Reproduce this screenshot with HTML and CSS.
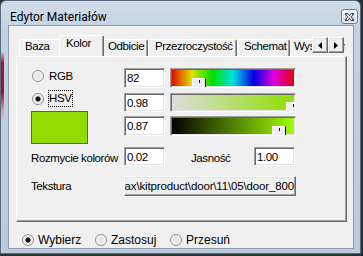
FILE: index.html
```html
<!DOCTYPE html>
<html lang="pl">
<head>
<meta charset="utf-8">
<title>Edytor Materiałów</title>
<link rel="stylesheet" href="styles.css">
</head>
<body>
<div class="window">
  <div class="titlebar">
    <span class="title">Edytor Materiałów</span>
    <span class="close">
      <svg width="9" height="8" viewBox="0 0 9 8"><path d="M1.5 1 L7.5 7 M7.5 1 L1.5 7" stroke="#2f3844" stroke-width="3" stroke-linecap="square"/><path d="M1.8 1.3 L7.2 6.7 M7.2 1.3 L1.8 6.7" stroke="#fff" stroke-width="1.3"/></svg>
    </span>
  </div>
  <div class="frame">
    <div class="client">
      <div class="tabrow">
        <div class="tab w-baza">Baza</div>
        <div class="tab selected">Kolor</div>
        <div class="tab w-odb">Odbicie</div>
        <div class="tab w-prz">Przezroczystość</div>
        <div class="tab w-sch">Schemat</div>
        <div class="tab w-wy">Wyświetlanie</div>
        <div class="scroller">
          <span class="sbtn"><svg width="4" height="7" viewBox="0 0 4 7"><path d="M4 0 L0 3.5 L4 7 Z" fill="#000"/></svg></span>
          <span class="sbtn"><svg width="4" height="7" viewBox="0 0 4 7"><path d="M0 0 L4 3.5 L0 7 Z" fill="#000"/></svg></span>
        </div>
      </div>
      <div class="panel">
        <div class="top">
          <div class="modes-col">
            <div class="opt rgb"><span class="radio"></span><span class="optlabel">RGB</span></div>
            <div class="opt hsv"><span class="radio checked"></span><span class="optlabel focus">HSV</span></div>
            <div class="swatch"></div>
          </div>
          <div class="channels">
            <div class="channel h20"><div class="edit">82</div><div class="track hue"><span class="thumb" style="left:calc(22.8% - 7px)"></span></div></div>
            <div class="channel h19"><div class="edit">0.98</div><div class="track sat"><span class="thumb" style="left:calc(98% - 7px)"></span></div></div>
            <div class="channel h20"><div class="edit">0.87</div><div class="track val"><span class="thumb" style="left:calc(87% - 7px)"></span></div></div>
          </div>
        </div>
        <div class="row row-blur">
          <span class="lbl lbl-first">Rozmycie kolorów</span>
          <div class="edit">0.02</div>
          <span class="lbl lbl-jas">Jasność</span>
          <div class="edit">1.00</div>
        </div>
        <div class="row row-tex">
          <span class="lbl lbl-first">Tekstura</span>
          <div class="button tex"><span>C:\3dsmax\kitproduct\door\11\05\door_800</span></div>
        </div>
      </div>
      <div class="modes">
        <div class="mode m1"><span class="radio checked"></span><span class="mlabel">Wybierz</span></div>
        <div class="mode m2"><span class="radio"></span><span class="mlabel">Zastosuj</span></div>
        <div class="mode m3"><span class="radio"></span><span class="mlabel">Przesuń</span></div>
      </div>
    </div>
  </div>
</div>
</body>
</html>
```

FILE: styles.css
```css
html, body {
  margin: 0;
  padding: 0;
}
body {
  background: #2a2e35;
  width: 363px;
  height: 256px;
  overflow: hidden;
}
.window {
  box-sizing: border-box;
  width: 361px;
  height: 254px;
  border: 1px solid #5b6b7e;
  border-radius: 6px 6px 0 0;
  background:
    linear-gradient(to bottom, rgba(0,0,0,0) 50px, #a3142a 62px, #a3142a 92px, #c8a6b6 110px, rgba(0,0,0,0) 122px) left top / 3px 100% no-repeat,
    linear-gradient(to bottom, #d2dde9 0, #c3d2e2 30px, #bccbdc 100%);
  overflow: hidden;
}
.titlebar {
  height: 24px;
  box-sizing: border-box;
  padding: 9px 2px 0 9px;
  display: flex;
  align-items: flex-start;
}
.title {
  font-family: Roboto, "Liberation Sans", sans-serif;
  font-size: 12px;
  line-height: 14px;
  color: #000;
}
.close {
  margin-left: auto;
  margin-top: -1px;
  box-sizing: border-box;
  width: 17px;
  height: 15px;
  border: 1px solid #6a788a;
  border-radius: 3px;
  background: linear-gradient(#eef3f8, #cfdae6);
  box-shadow: inset 0 0 0 1px rgba(255,255,255,0.7);
  display: flex;
  align-items: center;
  justify-content: center;
}
.close svg { display: block; }
.frame {
  padding: 0 6px 4px 7px;
}
.client {
  box-sizing: border-box;
  width: 346px;
  height: 224px;
  border: 1px solid #8d9cae;
  background: #f0f0f0;
  font-family: "Liberation Sans", Arial, sans-serif;
  font-size: 11.5px;
  letter-spacing: -0.4px;
  color: #000;
}
/* tabs */
.tabrow {
  position: relative;
  display: flex;
  align-items: flex-start;
  margin: 9px 0 0 10px;
  height: 21px;
  width: 326px;
  overflow: hidden;
  z-index: 2;
}
.tab {
  flex: none;
  box-sizing: border-box;
  height: 17px;
  margin-top: 4px;
  padding-left: 5px;
  line-height: 12px;
  background: #f0f0f0;
  border-top: 1px solid #fff;
  border-left: 1px solid #fff;
  border-right: 1px solid #696969;
  box-shadow: inset -1px 0 #a0a0a0;
  border-radius: 2px 2px 0 0;
  white-space: nowrap;
  overflow: hidden;
}
.w-baza { width: 42px; }
.w-odb { width: 46px; }
.w-prz { width: 89px; padding-left: 6px; }
.w-sch { width: 53px; padding-left: 6px; }
.w-wy { width: 60px; padding-left: 3px; }
.tab.selected {
  width: 45px;
  height: 22px;
  margin: 0 -2px;
  padding: 1px 0 0 6px;
  position: relative;
  z-index: 3;
}
.scroller {
  position: absolute;
  left: 293px;
  top: 2px;
  display: flex;
  z-index: 4;
}
.sbtn {
  box-sizing: border-box;
  width: 16px;
  height: 16px;
  background: #f0f0f0;
  border-top: 1px solid #fff;
  border-left: 1px solid #fff;
  border-right: 1px solid #696969;
  border-bottom: 1px solid #696969;
  box-shadow: inset -1px -1px #a0a0a0, inset 1px 1px #e3e3e3;
  display: flex;
  align-items: center;
  justify-content: center;
}
.sbtn svg { display: block; }
/* panel */
.panel {
  position: relative;
  z-index: 1;
  box-sizing: border-box;
  width: 331px;
  height: 166px;
  margin-left: 7px;
  padding: 11px 0 0 14px;
  border-top: 1px solid #fff;
  border-left: 1px solid #fff;
  border-right: 1px solid #696969;
  border-bottom: 1px solid #696969;
  box-shadow: inset -1px -1px #a0a0a0;
}
.top {
  display: flex;
}
.modes-col {
  width: 93px;
  display: flex;
  flex-direction: column;
}
.opt {
  display: flex;
  align-items: center;
}
.opt.rgb {
  margin-top: 2px;
  height: 12px;
}
.opt.hsv {
  margin-top: 8px;
  height: 17px;
}
.opt .radio { margin-left: 1px; }
.optlabel {
  margin-left: 5px;
  line-height: 12px;
}
.optlabel.focus {
  margin-left: 4px;
  box-sizing: border-box;
  height: 17px;
  line-height: 15px;
  border: 1px dotted #000;
  padding: 0 1px 0 0;
}
.swatch {
  margin-top: 4px;
  box-sizing: border-box;
  width: 57px;
  height: 33px;
  background: #92dc03;
  border: 1px solid #5c5c5c;
}
.channels {
  display: flex;
  flex-direction: column;
  gap: 5px;
}
.channels .h19 { height: 19px; margin-bottom: -1px; }
.channels .h20 { height: 20px; }
.channel {
  display: flex;
  gap: 5px;
}
.edit {
  box-sizing: border-box;
  width: 41px;
  height: 100%;
  background: #fff;
  border-top: 1px solid #a0a0a0;
  border-left: 1px solid #a0a0a0;
  border-bottom: 1px solid #fff;
  border-right: 1px solid #fff;
  box-shadow: inset 1px 1px #696969, inset -1px -1px #e3e3e3;
  padding: 1px 0 0 2px;
  line-height: 16px;
  white-space: nowrap;
  overflow: hidden;
}
.track {
  position: relative;
  box-sizing: border-box;
  width: 126px;
  height: 100%;
  border-top: 1px solid #a0a0a0;
  border-left: 1px solid #a0a0a0;
  border-bottom: 1px solid #fff;
  border-right: 1px solid #fff;
  overflow: hidden;
}
.track.hue {
  background: linear-gradient(to right, #e00000 0%, #e0e000 16.67%, #00e000 33.33%, #00e0e0 50%, #0000e0 66.67%, #e000e0 83.33%, #e00000 100%);
}
.track.sat {
  background: linear-gradient(to right, #dedede, #8ede00);
}
.track.val {
  background: linear-gradient(to right, #000, #a2ff04);
}
.track::after {
  content: "";
  position: absolute;
  inset: 0;
  box-shadow: inset 1px 1px #696969, inset -1px -1px #e3e3e3;
  pointer-events: none;
}
.thumb {
  position: absolute;
  bottom: 0;
  box-sizing: border-box;
  width: 14px;
  height: 9px;
  background: linear-gradient(#000, #000) 6px 1px / 1px 3px no-repeat, #f0f0f0;
  border-top: 1px solid #fff;
  border-left: 1px solid #fff;
  border-right: 1px solid #000;
  z-index: 1;
}
.row {
  display: flex;
  align-items: flex-start;
}
.row-blur {
  margin-top: 3px;
  height: 19px;
}
.row-tex {
  margin-top: 10px;
  height: 20px;
}
.lbl {
  white-space: nowrap;
}
.lbl-first {
  width: 93px;
  flex: none;
}
.row-blur .lbl {
  padding-top: 4px;
  line-height: 15px;
}
.row-tex .lbl {
  line-height: 20px;
}
.lbl-jas {
  margin-left: 26px;
  width: 63px;
}
.row-blur .edit { height: 19px; }
.button.tex {
  box-sizing: border-box;
  width: 172px;
  height: 20px;
  background: #f0f0f0;
  border-top: 1px solid #fff;
  border-left: 1px solid #fff;
  border-bottom: 1px solid #696969;
  border-right: 1px solid #696969;
  box-shadow: inset -1px -1px #a0a0a0, inset 1px 1px #e3e3e3;
  display: flex;
  justify-content: flex-end;
  align-items: center;
  overflow: hidden;
  white-space: nowrap;
  padding-right: 1px;
  line-height: 16px;
  letter-spacing: -0.15px;
}
.button.tex span { flex: none; }
/* radios */
.radio {
  flex: none;
  box-sizing: border-box;
  width: 12px;
  height: 12px;
  border-radius: 50%;
  border: 1px solid #8f8f8f;
  background: radial-gradient(circle at 50% 50%, #e4e4e4 0, #ececec 45%, #fbfbfb 100%);
}
.radio.checked {
  background: radial-gradient(circle at 50% 50%, #111 0, #1d1d1d 2.2px, #cfcfcf 2.9px, #ececec 45%, #fbfbfb 100%);
}
.modes {
  display: flex;
  align-items: center;
  margin: 11px 0 0 13px;
  height: 13px;
  font-family: "Liberation Sans", sans-serif;
  font-size: 12px;
  letter-spacing: 0;
}
.mode {
  display: flex;
  align-items: center;
}
.m1 { width: 73px; }
.m2 { width: 75px; }
.mlabel {
  margin-left: 4px;
  line-height: 14px;
}
```
